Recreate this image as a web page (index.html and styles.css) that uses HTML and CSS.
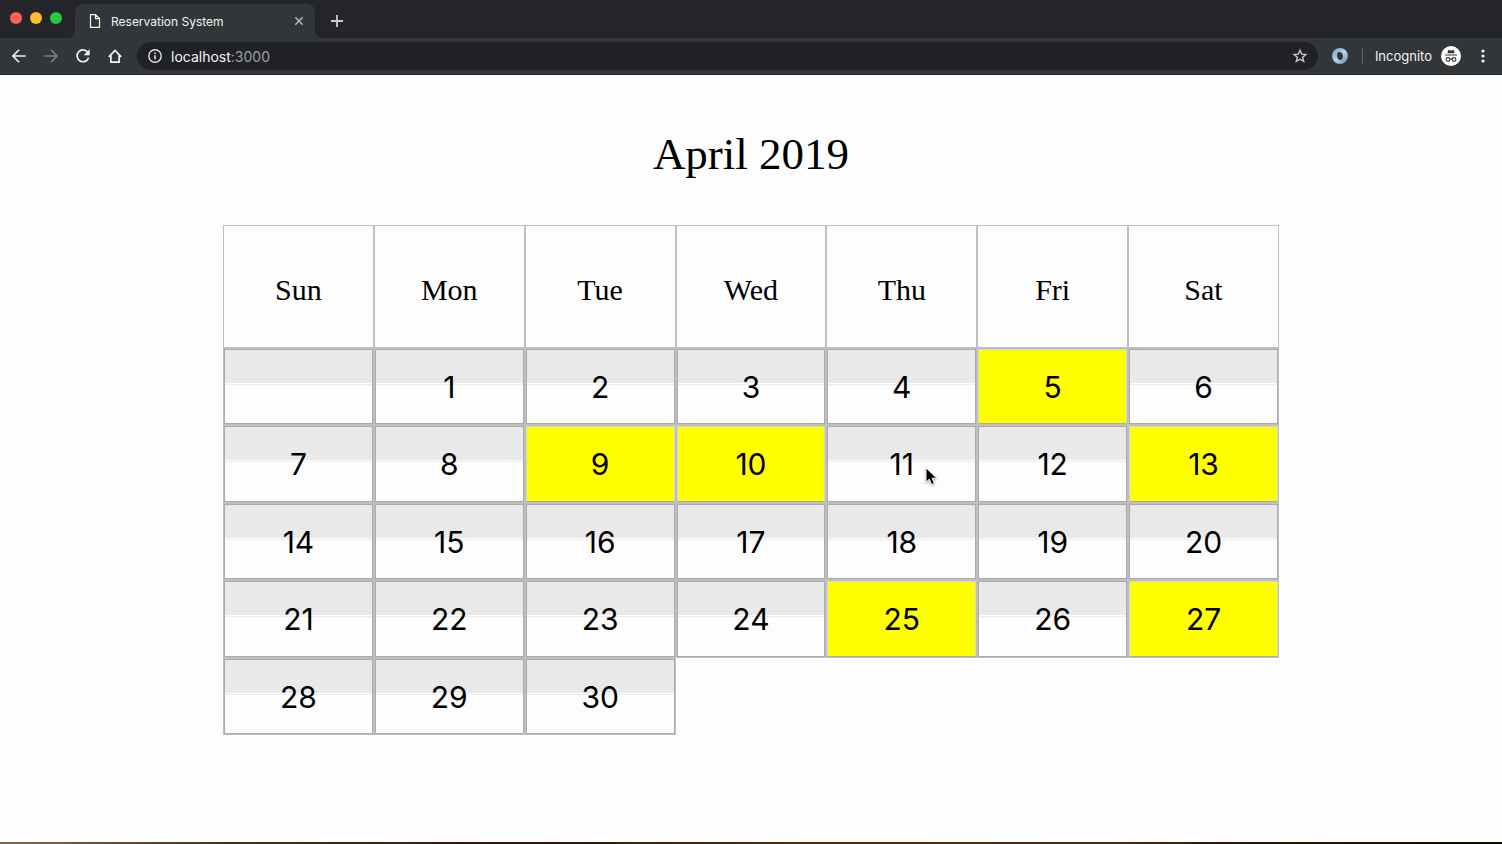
FILE: index.html
```html
<!DOCTYPE html>
<html lang="en">
<head>
<meta charset="utf-8">
<meta name="viewport" content="width=device-width, initial-scale=1">
<title>Reservation System</title>
<link rel="stylesheet" href="styles.css">
</head>
<body>
<header class="browser">
  <div class="tab-strip">
    <div class="lights">
      <button class="light close" aria-label="Close window"></button>
      <button class="light minimise" aria-label="Minimise window"></button>
      <button class="light maximise" aria-label="Maximise window"></button>
    </div>
    <div class="tab">
      <svg class="tab-page" width="12" height="14" viewBox="0 0 12 14" fill="none" stroke="#f1f3f4" stroke-width="1.200"><path d="M1.500 .6h5L10.500 4.600V13.400h-9zM6.500 .6v4h4"/></svg>
      <span class="tab-title">Reservation System</span>
      <button class="icon-button" aria-label="Close tab"><svg width="10" height="10" viewBox="0 0 10 10" stroke="#b4b8bc" stroke-width="1.500"><path d="M1.300 1.300l7.400 7.400M8.700 1.300L1.300 8.700"/></svg></button>
    </div>
    <button class="icon-button new-tab" aria-label="New tab"><svg width="12" height="12" viewBox="0 0 12 12" stroke="#c8cbd0" stroke-width="1.800"><path d="M6 0v12M0 6h12"/></svg></button>
  </div>
  <nav class="toolbar" aria-label="Browser">
    <div class="nav-buttons">
      <button class="icon-button" aria-label="Back"><svg width="14" height="14" viewBox="0 0 14 14" fill="none" stroke="#f1f3f4" stroke-width="1.500"><path d="M13.700 7H1.300M7 .9L.9 7 7 13.100"/></svg></button>
      <button class="icon-button" aria-label="Forward"><svg width="14" height="14" viewBox="0 0 14 14" fill="none" stroke="#7c7f82" stroke-width="1.500"><path d="M.3 7h12.400M7 .9L13.100 7 7 13.100"/></svg></button>
      <button class="icon-button" aria-label="Reload"><svg width="14" height="14" viewBox="0 0 14 14" fill="none" stroke="#f1f3f4" stroke-width="1.700"><path d="M11.600 3.100A5.900 5.900 0 1 0 12.600 8.800"/><path d="M13.700 .3v6H7.700z" fill="#f1f3f4" stroke="none"/></svg></button>
      <button class="icon-button" aria-label="Home"><svg width="14" height="14" viewBox="0 0 14 14" fill="none" stroke="#f1f3f4" stroke-width="1.700"><path d="M.8 7.800L7 1.500l6.200 6.300M2.900 6.500v6.600h8.200V6.500"/></svg></button>
    </div>
    <div class="address">
      <svg width="14" height="14" viewBox="0 0 14 14" fill="none" stroke="#dfe1e4" stroke-width="1.400"><circle cx="7" cy="7" r="6.200"/><path d="M7 6.200v4M7 3.500v1.500" stroke-width="1.600"/></svg>
      <span class="url">localhost<span class="port">:3000</span></span>
      <button class="icon-button" aria-label="Bookmark this page"><svg width="16" height="16" viewBox="0 0 16 16" fill="none" stroke="#c8cacd" stroke-width="1.400"><path d="M8 2.200l1.700 3.900 4.200.4-3.200 2.800.95 4.100L8 11.200l-3.650 2.200.95-4.100-3.200-2.800 4.200-.4z"/></svg></button>
    </div>
    <svg class="extension" width="16" height="16" viewBox="0 0 16 16"><defs><linearGradient id="ring" x1="0" y1="0" x2="1" y2="1"><stop offset="0" stop-color="#6f9cc9"/><stop offset=".5" stop-color="#b8cfe4"/><stop offset="1" stop-color="#6085ad"/></linearGradient></defs><path fill="url(#ring)" fill-rule="evenodd" d="M8 0a8 8 0 1 0 0 16A8 8 0 0 0 8 0zM7 4c2.500 0 4 1.800 4 4s-1 4-2.500 4S5 10.500 5 8s.5-4 2-4z"/></svg>
    <span class="divider"></span>
    <span class="mode">Incognito</span>
    <svg class="avatar" width="20" height="20" viewBox="0 0 20 20"><circle cx="10" cy="10" r="10" fill="#fff"/><path fill="#303338" d="M7.300 4l2.700.5 2.700-.5.900 3.200H6.400zM4 8.400h12v1.200H4z"/><g fill="none" stroke="#303338" stroke-width="1.100"><circle cx="7" cy="13.500" r="1.900"/><circle cx="13" cy="13.500" r="1.900"/><path d="M8.900 13.200q1.100-.6 2.200 0"/></g></svg>
    <button class="icon-button menu" aria-label="Menu"><svg width="4" height="14" viewBox="0 0 4 14" fill="#f1f3f4"><circle cx="2" cy="2" r="1.600"/><circle cx="2" cy="7" r="1.600"/><circle cx="2" cy="12" r="1.600"/></svg></button>
  </nav>
</header>
<main class="page">
  <h1 class="month">April 2019</h1>
  <table class="calendar">
    <thead>
      <tr><th scope="col">Sun</th><th scope="col">Mon</th><th scope="col">Tue</th><th scope="col">Wed</th><th scope="col">Thu</th><th scope="col">Fri</th><th scope="col">Sat</th></tr>
    </thead>
    <tbody>
      <tr><td><button class="day" aria-label="No date"></button></td><td><button class="day">1</button></td><td><button class="day">2</button></td><td><button class="day">3</button></td><td><button class="day">4</button></td><td><button class="day reserved">5</button></td><td><button class="day">6</button></td></tr>
      <tr><td><button class="day">7</button></td><td><button class="day">8</button></td><td><button class="day reserved">9</button></td><td><button class="day reserved">10</button></td><td class="hovered"><button class="day">11</button><svg class="pointer" width="13" height="19" viewBox="0 0 13 19"><path d="M1 .8v14.400l3.300-3 2.300 5.400 2.800-1.200L7.100 11.200h4.700z" fill="#000" stroke="#fff" stroke-width="1"/></svg></td><td><button class="day">12</button></td><td><button class="day reserved">13</button></td></tr>
      <tr><td><button class="day">14</button></td><td><button class="day">15</button></td><td><button class="day">16</button></td><td><button class="day">17</button></td><td><button class="day">18</button></td><td><button class="day">19</button></td><td><button class="day">20</button></td></tr>
      <tr><td><button class="day">21</button></td><td><button class="day">22</button></td><td><button class="day">23</button></td><td><button class="day">24</button></td><td><button class="day reserved">25</button></td><td><button class="day">26</button></td><td><button class="day reserved">27</button></td></tr>
      <tr><td><button class="day">28</button></td><td><button class="day">29</button></td><td><button class="day">30</button></td></tr>
    </tbody>
  </table>
</main>
<div class="desktop-edge"></div>
</body>
</html>
```

FILE: styles.css
```css
* { box-sizing: border-box; }

body {
  margin: 0;
  min-height: 100vh;
  display: flex;
  flex-direction: column;
  background: #fdfdfd;
  color: #000;
  font-family: "Liberation Serif", "Times New Roman", serif;
}

button { font: inherit; color: inherit; }
svg { display: block; flex: none; }

.browser {
  color: #f1f3f4;
  font-family: Inter, Roboto, sans-serif;
}

.tab-strip {
  height: 38px;
  display: flex;
  align-items: center;
  background: #242529;
}

.lights {
  display: flex;
  gap: 8px;
  padding: 0 13px 3px 10px;
}

.light {
  width: 12px;
  height: 12px;
  padding: 0;
  border: 0;
  border-radius: 50%;
}

.close { background: #ff5f57; }
.minimise { background: #ffbd2e; }
.maximise { background: #28c940; }

.tab {
  position: relative;
  align-self: flex-end;
  width: 240px;
  height: 34px;
  display: flex;
  align-items: center;
  gap: 10px;
  padding: 0 11px 0 14px;
  border-radius: 8px 8px 0 0;
  background: #323639;
  font-size: 12px;
}

.tab::before,
.tab::after {
  content: "";
  position: absolute;
  bottom: 0;
  width: 8px;
  height: 8px;
}

.tab::before {
  right: 100%;
  background: radial-gradient(circle at 0 0, #242529 8px, #323639 8px);
}

.tab::after {
  left: 100%;
  background: radial-gradient(circle at 100% 0, #242529 8px, #323639 8px);
}

.tab-title { flex: 1; white-space: nowrap; }

.icon-button {
  display: flex;
  padding: 0;
  border: 0;
  background: none;
}

.new-tab { margin: 3px 0 0 16px; }

.toolbar {
  height: 37px;
  display: flex;
  align-items: center;
  padding: 0 17px 0 12px;
  background: #323639;
  border-bottom: 1px solid #292c2f;
  font-size: 14px;
}

.nav-buttons {
  display: flex;
  gap: 18px;
  margin-right: 15px;
}

.address {
  flex: 1;
  height: 28px;
  display: flex;
  align-items: center;
  gap: 9px;
  padding: 0 10px 0 11px;
  border-radius: 14px;
  background: #202124;
}

.url { flex: 1; }
.port { color: #9aa0a6; }
.extension { margin: 0 14px; }

.divider {
  width: 1px;
  height: 16px;
  margin-right: 12px;
  background: #5f6368;
}

.mode { margin-right: 9px; font-size: 13px; }
.menu { margin-left: 20px; }

.page {
  flex: 1;
  padding: 53px 24px 24px;
}

.month {
  margin: 0 0 45px;
  font-size: 45px;
  line-height: 52px;
  font-weight: 400;
  text-align: center;
}

.calendar {
  width: 100%;
  max-width: 1056px;
  margin: 0 auto;
  table-layout: fixed;
  border-collapse: separate;
  border-spacing: 0;
}

.calendar th,
.calendar td {
  padding: 0;
  border: 1px solid #bfbfbf;
}

.calendar th {
  height: 123px;
  padding-top: 6px;
  font-size: 30px;
  font-weight: 400;
}

.day {
  display: block;
  width: 100%;
  height: 75px;
  padding: 0;
  border: 1px solid #ababab;
  background: linear-gradient(#e9e9e9 33px, #fdfdfd 33px, #fdfdfd 34px, #ececec 34px, #ececec 35px, #fdfdfd 35px);
  font-family: Inter, sans-serif;
  font-size: 30px;
}

.calendar tbody tr:nth-child(even) .day { height: 76px; }

.calendar .reserved {
  border-color: #d4d4dc #d4d4dc #ababab;
  background: #ff0;
}

.hovered { position: relative; }

.pointer {
  position: absolute;
  left: 98px;
  top: 41px;
  filter: drop-shadow(0 1px 1px rgba(0, 0, 0, 0.35));
}

.desktop-edge {
  height: 2px;
  background: linear-gradient(90deg, #8a6845, #4a3012 15%, #2a1a04 35%, #5a2c06 55%, #4d2807 75%, #2a1a06 82%, #0e0c04);
}
```
